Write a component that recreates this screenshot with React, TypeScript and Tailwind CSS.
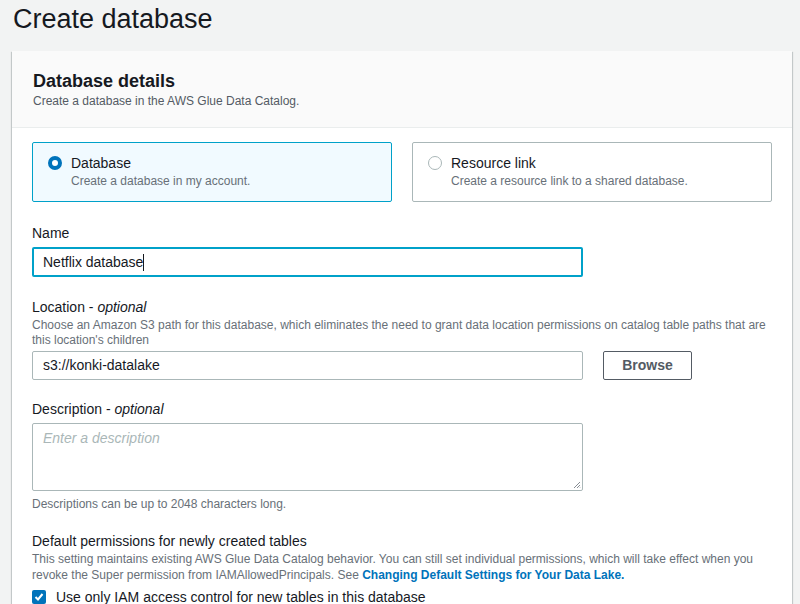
import React from "react";

export default function App() {
  return (
    <div
      className="w-[800px] h-[604px] overflow-hidden bg-[#f2f3f3] text-[#16191f]"
      style={{ fontFamily: '"Liberation Sans", Arial, sans-serif' }}
    >
      <h1 className="pl-[13px] pt-[2px] text-[27px] leading-[34px] font-normal text-[#16191f]">
        Create database
      </h1>
      <div className="mt-[15px] ml-[12px] w-[780px] bg-white shadow-[0_1px_1px_0_rgba(0,28,36,0.3),1px_1px_1px_0_rgba(0,28,36,0.15),-1px_1px_1px_0_rgba(0,28,36,0.15)]">
        <div className="bg-[#fafafa] border-b border-[#eaeded] px-[21px] pt-[19px] pb-[18px]">
          <h2 className="text-[18px] leading-[22px] font-bold">Database details</h2>
          <p className="text-[12px] leading-[16px] text-[#545b64] mt-[1px]">
            Create a database in the AWS Glue Data Catalog.
          </p>
        </div>
        <div className="px-[20px] pt-[14px] pb-[20px]">
          <div className="grid grid-cols-2 gap-[20px]">
            <div className="h-[60px] border border-[#00a1c9] bg-[#f1faff] rounded-[2px] flex items-start pl-[15px] pt-[10px]">
              <span className="mt-[3px] w-[14px] h-[14px] rounded-full border-[4px] border-[#0073bb] bg-white shrink-0" />
              <div className="ml-[9px]">
                <div className="text-[14px] leading-[20px]">Database</div>
                <div className="text-[12px] leading-[16px] text-[#687078]">Create a database in my account.</div>
              </div>
            </div>
            <div className="h-[60px] border border-[#aab7b8] bg-white rounded-[2px] flex items-start pl-[15px] pt-[10px]">
              <span className="mt-[3px] w-[14px] h-[14px] rounded-full border border-[#aab7b8] bg-white shrink-0" />
              <div className="ml-[9px]">
                <div className="text-[14px] leading-[20px]">Resource link</div>
                <div className="text-[12px] leading-[16px] text-[#687078]">Create a resource link to a shared database.</div>
              </div>
            </div>
          </div>

          <div className="mt-[21px]">
            <div className="text-[14px] leading-[20px]">Name</div>
            <div className="mt-[4px] w-[551px] h-[30px] border-2 border-[#00a1c9] rounded-[2px] flex items-center pl-[9px] text-[14px]">
              <span>Netflix database</span>
              <span className="inline-block w-px h-[17px] bg-[#16191f]" />
            </div>
          </div>

          <div className="mt-[20px]">
            <div className="text-[14px] leading-[20px]">
              Location - <i>optional</i>
            </div>
            <div className="mt-[1px] text-[12px] leading-[15px] text-[#687078] pr-[6px]">
              Choose an Amazon S3 path for this database, which eliminates the need to grant data location permissions on catalog table paths that are this location's children
            </div>
            <div className="mt-[3px] flex items-center gap-[20px]">
              <div className="w-[551px] h-[29px] border border-[#aab7b8] rounded-[2px] flex items-center pl-[10px] text-[14px]">
                s3://konki-datalake
              </div>
              <button className="w-[89px] h-[29px] border border-[#545b64] rounded-[2px] text-[14px] font-bold text-[#545b64] bg-white">
                Browse
              </button>
            </div>
          </div>

          <div className="mt-[19px]">
            <div className="text-[14px] leading-[20px]">
              Description - <i>optional</i>
            </div>
            <div className="mt-[4px] relative w-[551px] h-[68px] border border-[#aab7b8] rounded-[2px] pl-[10px] pt-[4px] text-[14px] italic text-[#aab7b8]">
              Enter a description
              <svg className="absolute right-[1px] bottom-[1px]" width="8" height="8" viewBox="0 0 8 8">
                <path d="M7 1 L1 7 M7 4 L4 7 M7 6.5 L6.5 7" stroke="#687078" strokeWidth="0.8" />
              </svg>
            </div>
            <div className="mt-[5px] text-[12px] leading-[16px] text-[#687078]">
              Descriptions can be up to 2048 characters long.
            </div>
          </div>

          <div className="mt-[19px]">
            <div className="text-[14px] leading-[20px]">Default permissions for newly created tables</div>
            <div className="text-[12px] leading-[16px] text-[#687078]">
              This setting maintains existing AWS Glue Data Catalog behavior. You can still set individual permissions, which will take effect when you revoke the Super permission from IAMAllowedPrincipals. See{" "}
              <span className="font-bold text-[#0073bb]">Changing Default Settings for Your Data Lake.</span>
            </div>
            <div className="mt-[4px] flex items-center gap-[10px]">
              <span className="w-[14px] h-[14px] rounded-[2px] bg-[#0073bb] flex items-center justify-center shrink-0">
                <svg width="12" height="12" viewBox="0 0 12 12">
                  <path d="M2.5 6 L5 8.5 L9.5 3" fill="none" stroke="white" strokeWidth="2" />
                </svg>
              </span>
              <span className="text-[14px] leading-[20px]">Use only IAM access control for new tables in this database</span>
            </div>
          </div>
        </div>
      </div>
    </div>
  );
}
